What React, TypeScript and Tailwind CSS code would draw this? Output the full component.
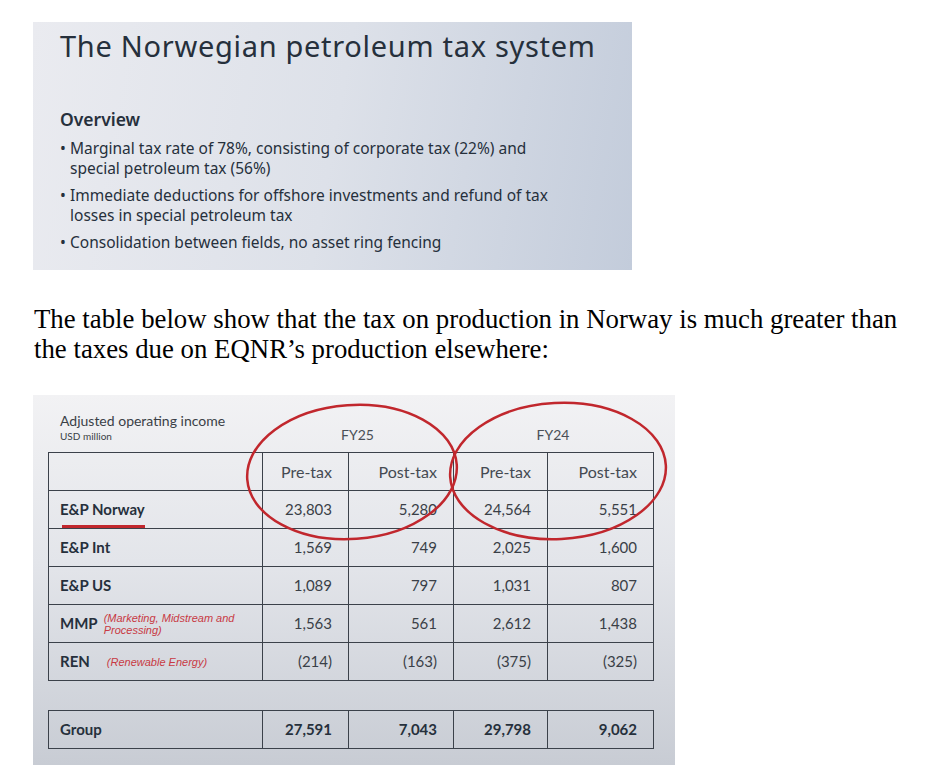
import React from 'react';

interface Row {
  label: string;
  note?: string[];
  values: string[];
}

const rows: Row[] = [
  { label: 'E&P Norway', values: ['23,803', '5,280', '24,564', '5,551'] },
  { label: 'E&P Int', values: ['1,569', '749', '2,025', '1,600'] },
  { label: 'E&P US', values: ['1,089', '797', '1,031', '807'] },
  { label: 'MMP', note: ['(Marketing, Midstream and', 'Processing)'], values: ['1,563', '561', '2,612', '1,438'] },
  { label: 'REN', note: ['(Renewable Energy)'], values: ['(214)', '(163)', '(375)', '(325)'] },
];

const bullets = [
  ['Marginal tax rate of 78%, consisting of corporate tax (22%) and', 'special petroleum tax (56%)'],
  ['Immediate deductions for offshore investments and refund of tax', 'losses in special petroleum tax'],
  ['Consolidation between fields, no asset ring fencing'],
];

const cell = 'border border-[#3b414a] text-right pr-[16px]';

const App: React.FC = () => {
  return (
    <div className="w-[927px] min-h-[780px] bg-white">
      {/* slide 1 */}
      <div className="pt-[22px] pl-[33px]">
        <div className="w-[599px] h-[248px] bg-[linear-gradient(100deg,#eaebf0_0%,#dde1e9_50%,#c3ccdb_100%)] pl-[27px] pt-[6px] text-[#26303c] font-['Noto_Sans',sans-serif]">
          <h1 className="text-[29px] leading-[36px] tracking-[0.7px]">The Norwegian petroleum tax system</h1>
          <h2 className="mt-[43px] text-[17.5px] leading-[24px] font-semibold">Overview</h2>
          <ul className="mt-[7px] flex flex-col gap-[7px] text-[15.5px] leading-[20px]">
            {bullets.map((lines, i) => (
              <li key={i} className="flex">
                <span className="w-[10px] shrink-0">•</span>
                <span>
                  {lines.map((l, j) => (
                    <span key={j} className="block">{l}</span>
                  ))}
                </span>
              </li>
            ))}
          </ul>
        </div>
      </div>

      <p className="mt-[34px] ml-[34px] font-['Liberation_Serif',serif] text-[26.8px] leading-[30px] text-black">
        The table below show that the tax on production in Norway is much greater than
        <br />
        the taxes due on EQNR’s production elsewhere:
      </p>

      {/* slide 2 */}
      <div className="relative mt-[31px] ml-[33px] w-[642px] h-[370px] bg-[linear-gradient(180deg,#f2f2f4_0%,#e3e5ea_45%,#c8ccd4_100%)] pl-[15px] font-['Lato',sans-serif]">
        <div className="flex items-end h-[57px] pb-[9px]">
          <div className="w-[214px] pl-[12px]">
            <div className="text-[14px] leading-[16px] text-[#3a3f47]">Adjusted operating income</div>
            <div className="text-[10px] leading-[14px] text-[#3a3f47]">USD million</div>
          </div>
          <div className="w-[191px] text-center text-[14px] leading-[16px] text-[#4a4f57]">FY25</div>
          <div className="w-[200px] text-center text-[14px] leading-[16px] text-[#4a4f57]">FY24</div>
        </div>

        <table className="border-collapse text-[15px] text-[#3a3f47]">
          <colgroup>
            <col className="w-[214px]" />
            <col className="w-[86px]" />
            <col className="w-[105px]" />
            <col className="w-[94px]" />
            <col className="w-[106px]" />
          </colgroup>
          <tbody>
            <tr className="h-[38px] text-[16px] text-[#454a52]">
              <td className="border border-[#3b414a]" />
              <td className={cell}>Pre-tax</td>
              <td className={cell}>Post-tax</td>
              <td className={cell}>Pre-tax</td>
              <td className={cell}>Post-tax</td>
            </tr>
            {rows.map(r => (
              <tr key={r.label} className="h-[38px]">
                <td className="border border-[#3b414a] pl-[11px]">
                  <div className="flex items-center">
                    <span className="relative font-bold text-[15px] text-[#26303c]">
                      {r.label}
                      {r.label === 'E&P Norway' && (
                        <span className="absolute left-[2px] right-0 -bottom-[7px] h-[3px] bg-[#c1272d]" />
                      )}
                    </span>
                    {r.note && (
                      <span className={`font-['Liberation_Sans',sans-serif] italic text-[11px] leading-[12px] text-[#c83a44] ${r.note.length > 1 ? 'ml-[6px]' : 'ml-[17px]'}`}>
                        {r.note.map(n => (
                          <span key={n} className="block">{n}</span>
                        ))}
                      </span>
                    )}
                  </div>
                </td>
                {r.values.map((v, i) => (
                  <td key={i} className={cell}>{v}</td>
                ))}
              </tr>
            ))}
          </tbody>
        </table>

        <table className="mt-[29px] border-collapse text-[15px] text-[#26303c] font-bold">
          <colgroup>
            <col className="w-[214px]" />
            <col className="w-[86px]" />
            <col className="w-[105px]" />
            <col className="w-[94px]" />
            <col className="w-[106px]" />
          </colgroup>
          <tbody>
            <tr className="h-[38px]">
              <td className="border border-[#3b414a] pl-[11px]">Group</td>
              <td className={cell}>27,591</td>
              <td className={cell}>7,043</td>
              <td className={cell}>29,798</td>
              <td className={cell}>9,062</td>
            </tr>
          </tbody>
        </table>

        {/* hand-drawn circles over the table */}
        <svg className="absolute inset-0 pointer-events-none" width="642" height="370" viewBox="0 0 642 370">
          <ellipse cx="319" cy="77" rx="105" ry="67" fill="none" stroke="#c1272d" strokeWidth="2.5" transform="rotate(-4 319 77)" />
          <ellipse cx="525" cy="76" rx="108" ry="68" fill="none" stroke="#c1272d" strokeWidth="2.5" transform="rotate(-3 525 76)" />
        </svg>
      </div>
    </div>
  );
};

export default App;
